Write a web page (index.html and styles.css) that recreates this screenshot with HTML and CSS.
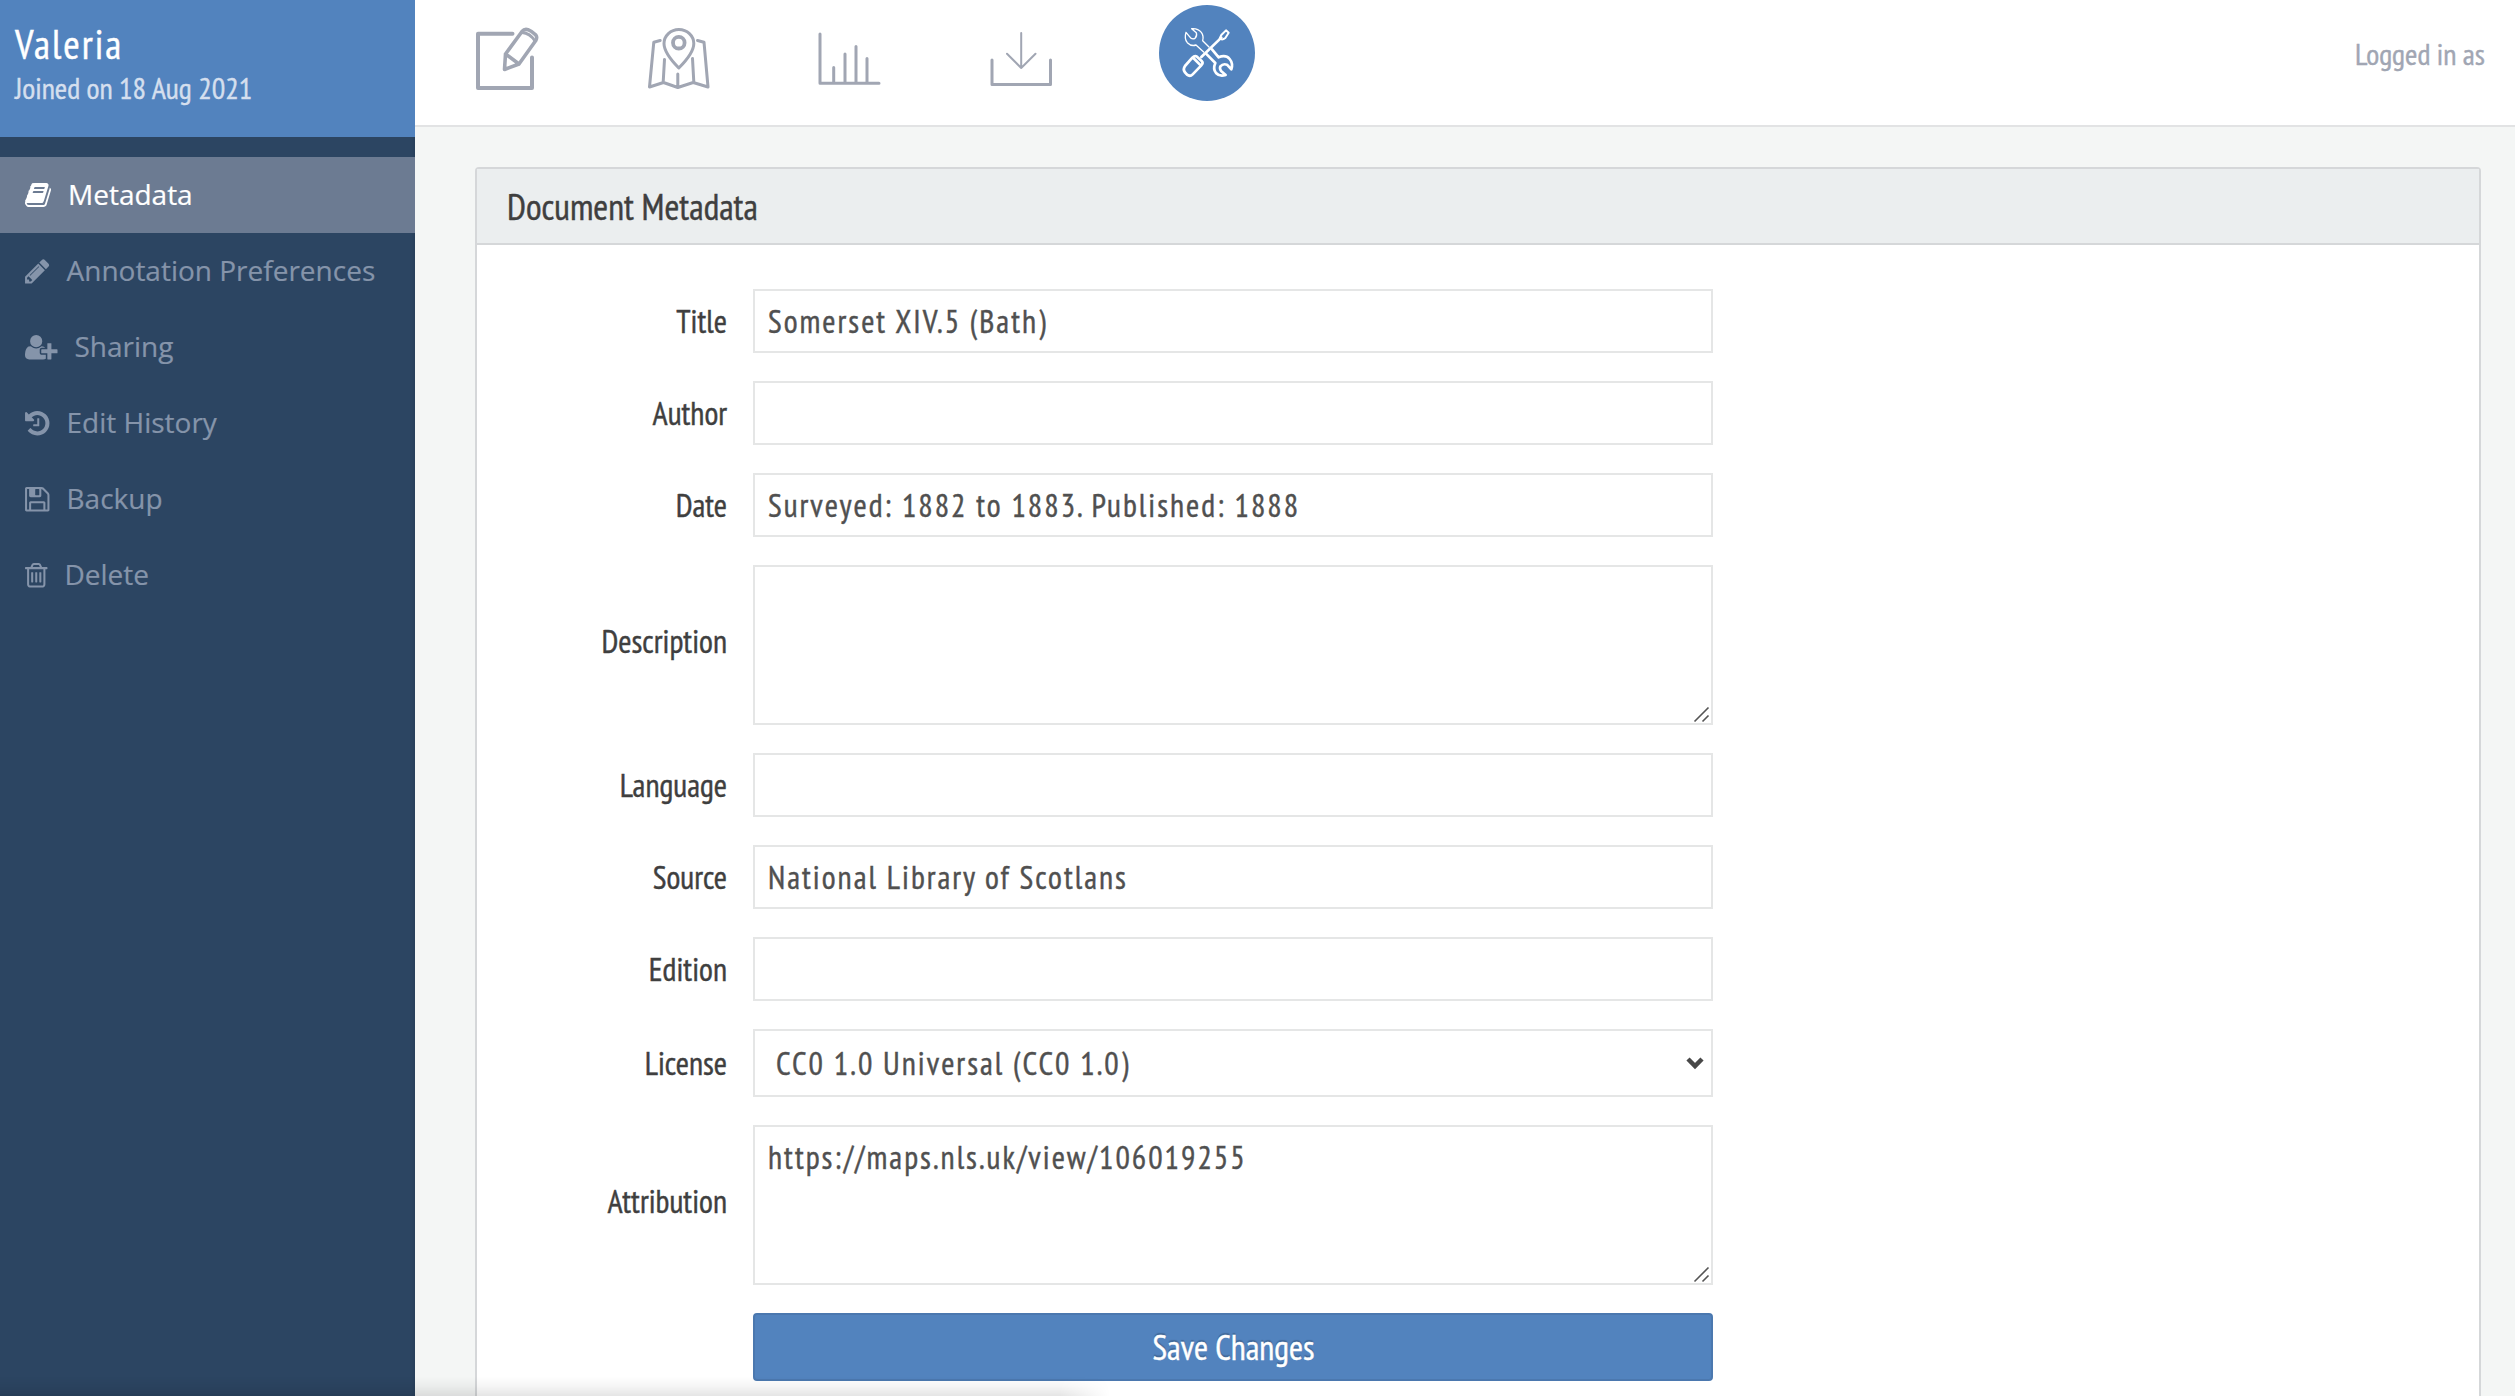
FILE: index.html
```html
<!DOCTYPE html>
<html lang="en">
<head>
<meta charset="utf-8">
<title>Document Metadata</title>
<link rel="stylesheet" href="styles.css">
</head>
<body>
<aside class="sidebar">
  <div class="account">
    <h1 class="account-name">Valeria</h1>
    <p class="account-joined">Joined on 18 Aug 2021</p>
  </div>
  <nav class="menu">
    <a class="menu-item active"><svg width="26" height="28" viewBox="64 0 1664 1792"><path d="M1703 478q40 57 18 129l-275 906q-19 64-76.5 107.5t-122.5 43.5h-923q-77 0-148.5-53.5t-99.5-131.5q-24-67-2-127 0-4 3-27t4-37q1-8-3-21.5t-3-19.5q2-11 8-21t16.5-23.5 16.5-23.5q23-38 45-91.5t30-91.5q3-10 .5-30t-.5-28q3-11 17-28t17-23q21-36 42-92t25-90q1-9-2.5-32t.5-28q4-13 22-30.5t22-22.5q19-26 42.5-84.5t27.5-96.5q1-8-3-25.5t-2-26.5q2-8 9-18t18-23 17-21q8-12 16.5-30.5t15-35 16-36 19.5-32 26.5-23.5 36-11.5 47.5 5.5l-1 3q38-9 51-9h761q74 0 114 56t18 130l-274 906q-36 119-71.5 153.5t-128.5 34.5h-869q-27 0-38 15-11 16-1 43 24 70 144 70h923q29 0 56-15.5t35-41.5l300-987q7-22 5-57 38 15 59 43zm-1064 2q-4 13 2 22.5t20 9.5h608q13 0 25.5-9.5t16.5-22.5l21-64q4-13-2-22.5t-20-9.5h-608q-13 0-25.5 9.5t-16.5 22.5zm-83 256q-4 13 2 22.5t20 9.5h608q13 0 25.5-9.5t16.5-22.5l21-64q4-13-2-22.5t-20-9.5h-608q-13 0-25.5 9.5t-16.5 22.5z"/></svg>Metadata</a>
    <a class="menu-item"><svg width="24.5" height="28.5" viewBox="128 0 1536 1792"><path d="M491 1536l91-91-235-235-91 91v107h128v128h107zm523-928q0-22-22-22-10 0-17 7l-542 542q-7 7-7 17 0 22 22 22 10 0 17-7l542-542q7-7 7-17zm-54-192l416 416-832 832h-416v-416zm683 96q0 53-37 90l-166 166-416-416 166-165q36-38 90-38 53 0 91 38l235 234q37 39 37 91z"/></svg>Annotation Preferences</a>
    <a class="menu-item"><svg width="32.5" height="28.5" viewBox="0 0 2048 1792"><path d="M704 896q-159 0-271.5-112.5t-112.5-271.5 112.5-271.5 271.5-112.5 271.5 112.5 112.5 271.5-112.5 271.5-271.5 112.5zm960 128h352q13 0 22.5 9.5t9.5 22.5v192q0 13-9.5 22.5t-22.5 9.5h-352v352q0 13-9.5 22.5t-22.5 9.5h-192q-13 0-22.5-9.5t-9.5-22.5v-352h-352q-13 0-22.5-9.5t-9.5-22.5v-192q0-13 9.5-22.5t22.5-9.5h352v-352q0-13 9.5-22.5t22.5-9.5h192q13 0 22.5 9.5t9.5 22.5v352zm-736 224q0 52 38 90t90 38h256v238q-68 50-171 50h-874q-121 0-194-69t-73-190q0-53 3.5-103.5t14-109 26.5-108.5 43-97.5 62-81 85.5-53.5 111.5-20q19 0 39 17 79 61 154.5 91.5t164.5 30.5 164.5-30.5 154.5-91.5q20-17 39-17 132 0 217 96h-223q-52 0-90 38t-38 90v192z"/></svg>Sharing</a>
    <a class="menu-item"><svg width="24.5" height="28.5" viewBox="128 0 1536 1792"><path d="M1664 896q0 156-61 298t-164 245-245 164-298 61q-172 0-327-72.5t-264-204.5q-7-10-6.5-22.5t8.5-20.5l137-138q10-9 25-9 16 2 23 12 73 95 179 147t225 52q104 0 198.5-40.5t163.5-109.5 109.5-163.5 40.5-198.5-40.5-198.5-109.5-163.5-163.5-109.5-198.5-40.5q-98 0-188 35.5t-160 101.5l137 138q31 30 14 69-17 40-59 40h-448q-26 0-45-19t-19-45v-448q0-42 40-59 39-17 69 14l130 129q107-101 244.5-156.5t284.5-55.5q156 0 298 61t245 164 164 245 61 298zm-640-288v448q0 14-9 23t-23 9h-320q-14 0-23-9t-9-23v-64q0-14 9-23t23-9h224v-352q0-14 9-23t23-9h64q14 0 23 9t9 23z"/></svg>Edit History</a>
    <a class="menu-item"><svg width="24.5" height="28.5" viewBox="128 0 1536 1792"><path d="M512 1536h768v-384h-768v384zm896 0h128v-896q0-14-10-38.5t-20-34.5l-281-281q-10-10-34-20t-39-10v416q0 40-28 68t-68 28h-576q-40 0-68-28t-28-68v-416h-128v1280h128v-416q0-40 28-68t68-28h832q40 0 68 28t28 68v416zm-384-928v-320q0-13-9.5-22.5t-22.5-9.5h-192q-13 0-22.5 9.5t-9.5 22.5v320q0 13 9.5 22.5t22.5 9.5h192q13 0 22.5-9.5t9.5-22.5zm640 32v928q0 40-28 68t-68 28h-1344q-40 0-68-28t-28-68v-1344q0-40 28-68t68-28h928q40 0 88 20t76 48l280 280q28 28 48 76t20 88z"/></svg>Backup</a>
    <a class="menu-item"><svg width="22.5" height="28.5" viewBox="192 0 1408 1792"><path d="M704 736v576q0 14-9 23t-23 9h-64q-14 0-23-9t-9-23v-576q0-14 9-23t23-9h64q14 0 23 9t9 23zm256 0v576q0 14-9 23t-23 9h-64q-14 0-23-9t-9-23v-576q0-14 9-23t23-9h64q14 0 23 9t9 23zm256 0v576q0 14-9 23t-23 9h-64q-14 0-23-9t-9-23v-576q0-14 9-23t23-9h64q14 0 23 9t9 23zm128 724v-948h-896v948q0 22 7 40.5t14.5 27 10.5 8.500h832q3 0 10.500-8.500t14.500-27 7-40.500zm-672-1076h448l-48-117q-7-9-17-11h-317q-10 2-17 11zm928 32v64q0 14-9 23t-23 9h-96v948q0 83-47 143.500t-113 60.500h-832q-66 0-113-58.500t-47-141.500v-952h-96q-14 0-23-9t-9-23v-64q0-14 9-23t23-9h309l70-167q15-37 54-63t79-26h320q40 0 79 26t54 63l70 167h309q14 0 23 9t9 23z"/></svg>Delete</a>
  </nav>
</aside>
<main class="main">
  <header class="topbar">
    <nav class="tools">
      <svg class="tool" viewBox="473 0 96 125"><g stroke-width="4"><path d="M512.5 33.7H478V88h54V57.5"/><path d="M505.5 54 522 31.5Q524.500 28.500 528 29.700Q532.500 31.500 535.800 35Q537.500 37.500 535.800 40.500L519 64ZM505.500 54 504.500 69.500 519 64" stroke-width="3.600"/><path d="M522 32.500Q530 33 535 41" stroke-width="3"/></g></svg>
      <svg class="tool" viewBox="644.5 0 96 125"><g stroke-width="3"><circle cx="678.3" cy="42.700" r="5.800" stroke-width="3.800"/><path d="M678.300 68Q663.500 53 663.500 43.500A14.900 14 0 0 1 693.300 43.500Q693.300 53 678.300 68Z"/><path d="M659.700 40.500 653.300 42.200 649 87 663 82.500 677.300 87.500 692.700 82.500 707.500 87 703.500 42.200 697 40.500M664 59.500 662.700 82M692 58.500 693.300 82M677.300 74V87.500"/></g></svg>
      <svg class="tool" viewBox="816 0 96 125"><g stroke-width="3"><path d="M820 34V83.300H879M833.700 67.500V83M845 54V83M856 46.500V83M867 58.500V83"/></g></svg>
      <svg class="tool" viewBox="987.5 0 96 125"><path d="M991.500 60V84.500H1050V60" stroke-width="3"/><path d="M1020.700 33V68M1006.500 53.700 1020.700 68 1035 53.700" stroke-width="2"/></svg>
      <svg class="tool tool-current" viewBox="1159 0 96 125"><circle class="disc" cx="1207" cy="53" r="48"/><g transform="translate(960 0) scale(.33333)" stroke-width="8"><path stroke-width="4" d="M747 141 728 122Q732 108 724 97Q713 84 695 86L709 98Q712 108 705 115Q695 120 688 109L678 97Q672 116 682 128Q694 140 708 135L731 156"/><path d="M756 148 776 172Q797 163 809 177Q820 190 814 208L801 194Q789 190 781 199Q778 207 784 214L797 225Q779 231 768 219Q758 207 766 189L738 161"/><path d="M724 171 784 113"/><path d="M784 105 798 91 806 98 796 114Q786 122 779 115Z" stroke-width="6"/><path d="M697 173Q704 166 711 170L725 183Q731 189 724 196L698 223Q690 231 681 224L674 216Q668 208 675 198ZM700 174 722 196"/></g></svg>
    </nav>
    <span class="login">Logged in as</span>
  </header>
  <section class="panel">
    <h2 class="panel-title">Document Metadata</h2>
    <form class="form">
      <div class="row"><label for="title">Title</label><input class="control" id="title" value="Somerset XIV.5 (Bath)"></div>
      <div class="row"><label for="author">Author</label><input class="control" id="author"></div>
      <div class="row"><label for="date">Date</label><input class="control" id="date" value="Surveyed: 1882 to 1883. Published: 1888"></div>
      <div class="row row-tall"><label for="description">Description</label><div class="field"><textarea class="control" id="description"></textarea><svg class="grip" width="18" height="18"><path d="M1.500 15.500 15.500 1.500M9.500 15.500 15.500 9.500"/></svg></div></div>
      <div class="row"><label for="language">Language</label><input class="control" id="language"></div>
      <div class="row"><label for="source">Source</label><input class="control" id="source" value="National Library of Scotlans"></div>
      <div class="row"><label for="edition">Edition</label><input class="control" id="edition"></div>
      <div class="row"><label for="license">License</label><div class="field"><select class="control" id="license"><option>CC0 1.0 Universal (CC0 1.0)</option></select><svg class="chevron" width="20" height="14"><path d="M3 3 10 10 17 3"/></svg></div></div>
      <div class="row row-tall"><label for="attribution">Attribution</label><div class="field"><textarea class="control" id="attribution">https://maps.nls.uk/view/106019255</textarea><svg class="grip" width="18" height="18"><path d="M1.500 15.500 15.500 1.500M9.500 15.500 15.500 9.500"/></svg></div></div>
      <button class="save" type="button">Save Changes</button>
    </form>
  </section>
</main>
<div class="edge-shadow"></div>
</body>
</html>
```
FILE: styles.css
```css
* { box-sizing: border-box; }

body {
  display: flex;
  height: 1396px;
  margin: 0;
  overflow: hidden;
  background: #f4f6f5;
  color: #3f3f3f;
  font-family: "PT Sans Narrow", "Open Sans", sans-serif;
  font-stretch: 75%;
  -webkit-text-stroke: .4px;
}

h1, h2, p { margin: 0; font-weight: 400; }

.sidebar {
  flex: 0 0 415px;
  background: #2c4562;
  box-shadow: inset -3px 0 4px -2px rgba(0, 0, 0, .12);
}

.account {
  height: 137px;
  padding: 18px 15px 0;
  background: #5283be;
}
.account-name { color: #fff; font-size: 40px; line-height: 52px; letter-spacing: 2px; }
.account-joined { color: #d5dfee; font-size: 30px; line-height: 35px; }

.menu { padding-top: 20px; }
.menu-item {
  display: flex;
  align-items: center;
  gap: 17px;
  height: 76px;
  padding: 0 0 2px 25px;
  color: #8594aa;
  font: 400 28px "Open Sans", sans-serif;
  -webkit-text-stroke: .2px;
}
.menu-item svg { fill: currentColor; position: relative; top: 1px; }
.menu-item.active { background: #6c7b92; color: #fff; }

.main { display: flex; flex: 1; flex-direction: column; min-width: 0; }

.topbar {
  display: flex;
  flex: 0 0 127px;
  justify-content: space-between;
  padding: 0 30px 0 58px;
  border-bottom: 2px solid #e2e3e4;
  background: #fff;
}
.tools { display: flex; gap: 75.500px; }
.tool {
  width: 96px;
  height: 125px;
  fill: none;
  stroke: #a1a6b3;
  stroke-linecap: round;
  stroke-linejoin: round;
}
.tool-current { stroke: #fff; }
.disc { fill: #5283be; stroke: none; }
.login { padding-top: 34px; color: #a1a6b3; font-size: 30px; line-height: 40px; }

.panel {
  flex: 1;
  margin: 40px 34px 0 60px;
  border: 2px solid #d5d7d9;
  border-bottom: 0;
  border-radius: 4px 4px 0 0;
  background: #fff;
}
.panel-title {
  height: 76px;
  padding-left: 30px;
  border-bottom: 2px solid #d5d7d9;
  background: #ebeeef;
  font-size: 36px;
  line-height: 75px;
}

.form {
  display: grid;
  gap: 28px;
  width: 1236px;
  padding-top: 44px;
}
.row {
  display: grid;
  grid-template-columns: 250px 960px;
  gap: 26px;
  align-items: center;
  font-size: 32px;
}
.row label { text-align: right; }
.row-tall label { padding-bottom: 8px; }
.field { display: grid; position: relative; }

.control {
  display: block;
  width: 100%;
  height: 64px;
  margin: 0;
  padding: 0 12px 0 13px;
  border: 2px solid #e5e6e6;
  border-radius: 0;
  outline: 0;
  background: #fff;
  color: #505050;
  font: inherit;
  letter-spacing: 2px;
}
textarea.control { height: 160px; padding-top: 9px; line-height: 42px; resize: none; }
select.control { height: 68px; padding-left: 21px; appearance: none; }

.grip { position: absolute; right: 2px; bottom: 1px; fill: none; stroke: #555; stroke-width: 1.600; }
.chevron { position: absolute; right: 8px; top: 27px; fill: none; stroke: #484848; stroke-width: 4.500; }

.save {
  width: 960px;
  height: 68px;
  margin-left: 276px;
  padding: 0 0 0 1px;
  border: 2px solid #4b78af;
  border-radius: 4px;
  background: #5283be;
  color: #fff;
  font: inherit;
  font-size: 34px;
  text-shadow: 0 -2px 1px rgba(0, 0, 0, .2);
}

.edge-shadow {
  position: fixed;
  left: 0;
  bottom: 0;
  width: 1110px;
  height: 20px;
  background: linear-gradient(to top, rgba(0, 0, 0, .1), rgba(0, 0, 0, .03) 55%, transparent);
  mask-image: linear-gradient(to left, transparent, #000 50px);
}
```
